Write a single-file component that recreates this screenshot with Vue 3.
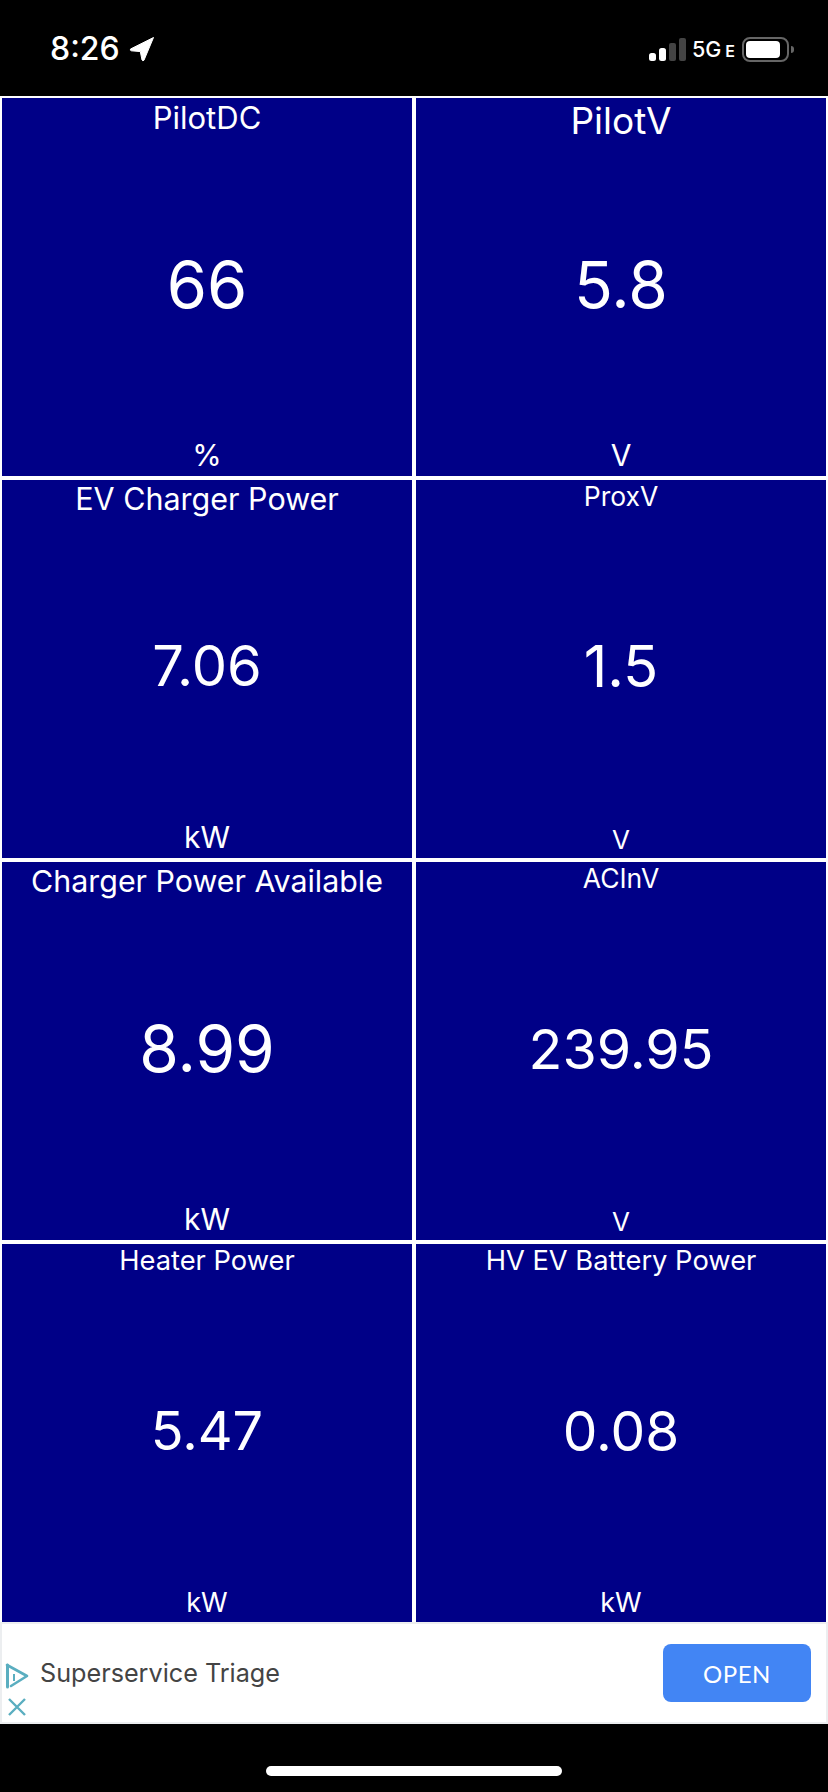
<template>
  <div class="screen">
    <header class="status-bar">
      <div class="status-left">
        <span class="time">8:26</span>
        <svg class="location" viewBox="0 0 26 26" width="26" height="26">
          <path d="M24.5 1.5 L1.5 13 Q0.8 14.4 2.3 14.8 L11.3 15.6 L13 24 Q13.8 25.4 15 24.2 Z" fill="#fff" stroke="#fff" stroke-width="1" stroke-linejoin="round" />
        </svg>
      </div>
      <div class="status-right">
        <svg class="signal" viewBox="0 0 37 23" width="37" height="23">
          <rect x="0" y="15" width="7" height="8" rx="2.5" fill="#fff" />
          <rect x="10" y="10" width="7" height="13" rx="2.5" fill="#fff" />
          <rect x="20" y="5" width="7" height="18" rx="2" fill="#444" />
          <rect x="30" y="0" width="7" height="23" rx="2" fill="#444" />
        </svg>
        <span class="network">5G<small>E</small></span>
        <div class="battery">
          <div class="battery-body"><div class="battery-fill"></div></div>
          <div class="battery-nub"></div>
        </div>
      </div>
    </header>

    <main class="grid">
      <section v-for="cell in cells" :key="cell.title" class="cell">
        <div class="title" :style="{ fontSize: cell.titleSize + 'px' }">{{ cell.title }}</div>
        <div class="value" :style="{ fontSize: cell.valueSize + 'px' }">{{ cell.value }}</div>
        <div class="unit" :style="{ fontSize: cell.unitSize + 'px' }">{{ cell.unit }}</div>
      </section>
    </main>

    <aside class="ad">
      <div class="ad-icons">
        <svg viewBox="0 0 24 26" width="24" height="26">
          <path d="M2 2 L22 13 L6 23" fill="none" stroke="#5aaec0" stroke-width="2.6" stroke-linejoin="round" stroke-linecap="round" />
          <path d="M2.5 2 L2.5 24" fill="none" stroke="#5aaec0" stroke-width="3" stroke-linecap="round" />
          <path d="M9 11 L9 18" fill="none" stroke="#5aaec0" stroke-width="2" />
        </svg>
        <svg viewBox="0 0 20 20" width="20" height="20">
          <path d="M2 2 L18 18 M18 2 L2 18" fill="none" stroke="#5aaec0" stroke-width="2.4" />
        </svg>
      </div>
      <span class="ad-title">Superservice Triage</span>
      <button class="ad-open">OPEN</button>
    </aside>

    <footer class="home-bar">
      <div class="home-indicator"></div>
    </footer>
  </div>
</template>

<script setup>
const cells = [
  { title: 'PilotDC', value: '66', unit: '%', titleSize: 31, valueSize: 65, unitSize: 30 },
  { title: 'PilotV', value: '5.8', unit: 'V', titleSize: 37, valueSize: 64, unitSize: 30 },
  { title: 'EV Charger Power', value: '7.06', unit: 'kW', titleSize: 30.5, valueSize: 56, unitSize: 30 },
  { title: 'ProxV', value: '1.5', unit: 'V', titleSize: 26.5, valueSize: 58, unitSize: 26 },
  { title: 'Charger Power Available', value: '8.99', unit: 'kW', titleSize: 30.4, valueSize: 64, unitSize: 30 },
  { title: 'ACInV', value: '239.95', unit: 'V', titleSize: 26.5, valueSize: 55.5, unitSize: 26 },
  { title: 'Heater Power', value: '5.47', unit: 'kW', titleSize: 27.3, valueSize: 54, unitSize: 27 },
  { title: 'HV EV Battery Power', value: '0.08', unit: 'kW', titleSize: 27.3, valueSize: 55, unitSize: 27 },
];
</script>

<style>
html,
body {
  margin: 0;
  background: #000;
}
</style>

<style scoped>
.screen {
  width: 828px;
  height: 1792px;
  display: flex;
  flex-direction: column;
  background: #000;
  font-family: Inter, "Liberation Sans", sans-serif;
  overflow: hidden;
}

.status-bar {
  height: 96px;
  box-sizing: border-box;
  padding: 30px 34px 0 50px;
  display: flex;
  justify-content: space-between;
  align-items: flex-start;
  color: #fff;
}

.status-left {
  display: flex;
  align-items: center;
  gap: 9px;
}

.time {
  font-size: 32px;
  line-height: 38px;
  font-weight: 500;
}

.status-right {
  display: flex;
  align-items: center;
  gap: 6px;
  height: 38px;
}

.network {
  font-size: 21.5px;
  font-weight: 500;
  margin-right: 1px;
}

.network small {
  font-size: 16px;
  font-weight: 600;
  margin-left: 4px;
}

.battery {
  display: flex;
  align-items: center;
  gap: 2px;
}

.battery-body {
  width: 47px;
  height: 25px;
  box-sizing: border-box;
  border: 2px solid #666;
  border-radius: 8px;
  padding: 2px 7px 2px 2px;
}

.battery-fill {
  height: 100%;
  background: #fff;
  border-radius: 4px;
}

.battery-nub {
  width: 3px;
  height: 7px;
  background: #666;
  border-radius: 0 3px 3px 0;
}

.grid {
  display: grid;
  grid-template-columns: 1fr 1fr;
  grid-auto-rows: 378px;
  gap: 4px;
  padding: 2px 2px 0;
  background: #fff;
}

.cell {
  display: grid;
  grid-template-rows: 1fr auto 1fr;
  justify-items: center;
  box-sizing: border-box;
  padding: 1px 0 3px;
  background: #000087;
  color: #fff;
  overflow: hidden;
}

.title {
  align-self: start;
  line-height: 1.2;
}

.value {
  margin-bottom: 2px;
  line-height: 1.2;
}

.unit {
  align-self: end;
  line-height: 1.2;
}

.ad {
  height: 102px;
  box-sizing: border-box;
  display: flex;
  align-items: center;
  background: #fff;
  border: 2px solid #eceef0;
  padding: 0 15px 0 3px;
}

.ad-icons {
  display: flex;
  flex-direction: column;
  align-self: flex-end;
  align-items: center;
  gap: 8px;
  padding-bottom: 5px;
}

.ad-title {
  flex: 1;
  margin-left: 11px;
  font-size: 25.2px;
  color: #444;
}

.ad-open {
  width: 148px;
  height: 58px;
  border: none;
  border-radius: 8px;
  background: #4285f4;
  color: #fff;
  font-family: Lato, sans-serif;
  font-size: 24px;
  letter-spacing: 0.5px;
}

.home-bar {
  flex: 1;
  display: flex;
  justify-content: center;
  padding-top: 42px;
}

.home-indicator {
  width: 296px;
  height: 10px;
  border-radius: 5px;
  background: #fff;
}
</style>
